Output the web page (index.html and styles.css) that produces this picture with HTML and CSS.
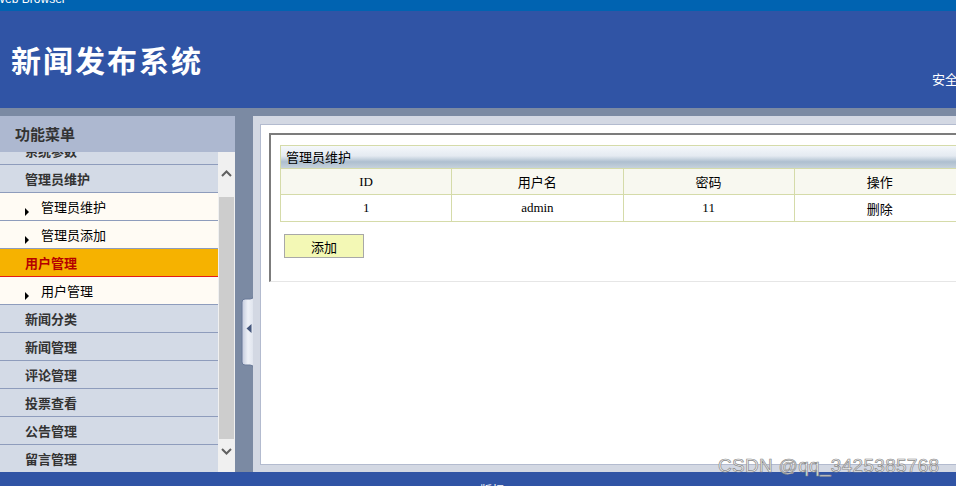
FILE: index.html
```html
<!DOCTYPE html>
<html lang="zh-CN">
<head>
<meta charset="utf-8">
<title>新闻发布系统</title>
<link rel="stylesheet" href="styles.css">
</head>
<body>
<div class="page">
  <div class="topbar"><span>Web Browser</span></div>
  <header class="header">
    <h1 class="title">新闻发布系统</h1>
    <div class="hdr-right">安全退出</div>
  </header>
  <div class="main-area">
    <aside class="sidebar">
      <div class="side-title">功能菜单</div>
      <div class="side-menu">
        <div class="menu-viewport">
          <ul class="menu">
            <li class="cat">系统参数</li>
            <li class="cat">管理员维护</li>
            <li class="sub">管理员维护</li>
            <li class="sub">管理员添加</li>
            <li class="cat active">用户管理</li>
            <li class="sub">用户管理</li>
            <li class="cat">新闻分类</li>
            <li class="cat">新闻管理</li>
            <li class="cat">评论管理</li>
            <li class="cat">投票查看</li>
            <li class="cat">公告管理</li>
            <li class="cat">留言管理</li>
          </ul>
        </div>
        <div class="scrollbar">
          <div class="sb-up"><svg width="11" height="7" viewBox="0 0 11 7"><path d="M1 6 L5.5 1.5 L10 6" fill="none" stroke="#606060" stroke-width="2"/></svg></div>
          <div class="sb-thumb"></div>
          <div class="sb-down"><svg width="11" height="7" viewBox="0 0 11 7"><path d="M1 1 L5.5 5.5 L10 1" fill="none" stroke="#606060" stroke-width="2"/></svg></div>
        </div>
      </div>
    </aside>
    <div class="splitter">
      <svg class="toggle" width="13" height="72" viewBox="0 0 13 72">
        <defs>
          <linearGradient id="tg" x1="0" y1="0" x2="1" y2="0">
            <stop offset="0" stop-color="#c3cadc"/>
            <stop offset="0.5" stop-color="#eef1f7"/>
            <stop offset="1" stop-color="#dde2ec"/>
          </linearGradient>
        </defs>
        <path d="M12.5 0 Q12.5 3 9 3 L4 3 Q1 3 1 6 L1 66 Q1 69 4 69 L9 69 Q12.5 69 12.5 72 L13 72 L13 0 Z" fill="url(#tg)" stroke="#6a7a99" stroke-width="1"/>
        <path d="M10.5 28 L5.5 32.5 L10.5 37 Z" fill="#45577c"/>
      </svg>
    </div>
    <main class="frame">
      <div class="content">
        <div class="box">
          <div class="panel">
            <div class="panel-title">管理员维护</div>
            <table class="grid">
              <tr>
                <th class="num">ID</th>
                <th>用户名</th>
                <th>密码</th>
                <th>操作</th>
              </tr>
              <tr>
                <td class="num">1</td>
                <td class="num">admin</td>
                <td class="num">11</td>
                <td>删除</td>
              </tr>
            </table>
          </div>
          <button class="btn" type="button">添加</button>
        </div>
      </div>
    </main>
  </div>
  <footer class="footer">版权</footer>
  <div class="watermark">CSDN @qq_3425385768</div>
</div>
</body>
</html>
```

FILE: styles.css
```css
html, body {
  margin: 0;
  padding: 0;
  overflow: hidden;
}
body {
  font-family: "Noto Sans CJK SC", "Noto Sans", sans-serif;
  font-size: 13px;
  background: #3054a5;
}
.page {
  width: 1000px;
  position: relative;
}
.topbar {
  height: 11px;
  background: #0063b1;
  overflow: hidden;
  color: #fff;
  font: 12px/12px "Liberation Sans", Arial, sans-serif;
}
.topbar span {
  display: block;
  margin: -7px 0 0 -6px;
}
.header {
  height: 97px;
  background: #3054a5;
  display: flex;
  color: #fff;
}
.title {
  margin: 0;
  padding: 33px 0 0 11px;
  font-size: 30px;
  line-height: 30px;
  font-weight: bold;
  letter-spacing: 2px;
}
.hdr-right {
  margin: 61px 0 0 auto;
  padding-right: 16px;
  font-size: 13px;
  line-height: 13px;
}
.main-area {
  display: flex;
  height: 356px;
  padding-top: 8px;
  background: #7b8aa3;
}
.sidebar {
  width: 235px;
  display: flex;
  flex-direction: column;
}
.side-title {
  height: 36px;
  line-height: 36px;
  background: #adb8d0;
  color: #333;
  font-weight: bold;
  font-size: 15px;
  padding-left: 15px;
}
.side-menu {
  flex: 1;
  display: flex;
  min-height: 0;
}
.menu-viewport {
  width: 218px;
  overflow: hidden;
}
.menu {
  list-style: none;
  margin: -15px 0 0;
  padding: 0;
}
.menu li {
  height: 27px;
  line-height: 27px;
  border-bottom: 1px solid #8e9cbc;
  display: flex;
  align-items: center;
}
.cat {
  background: #d3dae6;
  color: #333;
  font-weight: bold;
  padding-left: 25px;
}
.cat.active {
  background: #f6b200;
  color: #b50000;
  border-bottom-color: #e31b1b;
}
.sub {
  background: #fffbf4;
  color: #000;
  padding-left: 25px;
}
.sub::before {
  content: "";
  width: 0;
  height: 0;
  border-left: 4px solid #000;
  border-top: 4px solid transparent;
  border-bottom: 4px solid transparent;
  margin: 10px 12px 0 0;
}
.scrollbar {
  width: 17px;
  background: #f0f0f0;
  display: flex;
  flex-direction: column;
}
.sb-up {
  height: 45px;
  box-sizing: border-box;
  padding-top: 18px;
  display: flex;
  justify-content: center;
  align-items: flex-start;
}
.sb-thumb {
  height: 242px;
  margin: 0 1px;
  background: #cdcdcd;
}
.sb-down {
  height: 33px;
  box-sizing: border-box;
  padding-top: 9px;
  display: flex;
  justify-content: center;
  align-items: flex-start;
}
.splitter {
  width: 18px;
  box-sizing: border-box;
  padding-top: 180px;
  display: flex;
  justify-content: flex-end;
  align-items: flex-start;
}
.toggle {
  display: block;
  margin-right: -1px;
}
.frame {
  flex: 1;
  background: #d3d8e3;
  padding: 8px 7px 7px 7px;
  display: flex;
}
.content {
  flex: 1;
  background: #fff;
  border: 1px solid #b3bbcf;
  padding: 8px;
}
.box {
  border-top: 2px solid #7c7c7c;
  border-left: 2px solid #7c7c7c;
  border-bottom: 1px solid #e6e6e6;
  border-right: 1px solid #e6e6e6;
  padding: 10px 9px 23px;
}
.panel {
  width: 686px;
}
.panel-title {
  box-sizing: border-box;
  height: 23px;
  line-height: 22px;
  border: 1px solid #d5dba9;
  border-bottom: none;
  padding-left: 5px;
  color: #000;
  background: linear-gradient(#f5f8fb 0%, #e4eaf1 45%, #aebfcf 72%, #c6d2dc 100%);
}
.grid {
  width: 686px;
  border-collapse: collapse;
  table-layout: fixed;
}
.grid th, .grid td {
  border: 1px solid #d5dba9;
  height: 26px;
  padding: 0;
  text-align: center;
  font-weight: normal;
  font-size: 13px;
  color: #000;
}
.grid th {
  height: 25px;
  background: #f8f8f0;
}
.num {
  font-family: "Liberation Serif", "Times New Roman", serif;
}
.btn {
  display: block;
  margin: 12px 0 0 4px;
  width: 80px;
  height: 24px;
  padding: 0;
  background: #f3f8b5;
  border: 1px solid #a8a8a8;
  font-family: "Noto Sans CJK SC", sans-serif;
  font-size: 13px;
  color: #000;
}
.footer {
  height: 30px;
  box-sizing: border-box;
  padding: 11px 16px 0 0;
  background: #3054a5;
  color: #fff;
  font-size: 12px;
  line-height: 13px;
  text-align: center;
}
.watermark {
  position: absolute;
  left: 718px;
  top: 455px;
  font-family: "Liberation Sans", Arial, sans-serif;
  font-size: 19px;
  letter-spacing: 0.3px;
  color: #f4f4f4;
  -webkit-text-stroke: 0.7px #8a8a8a;
}
```
